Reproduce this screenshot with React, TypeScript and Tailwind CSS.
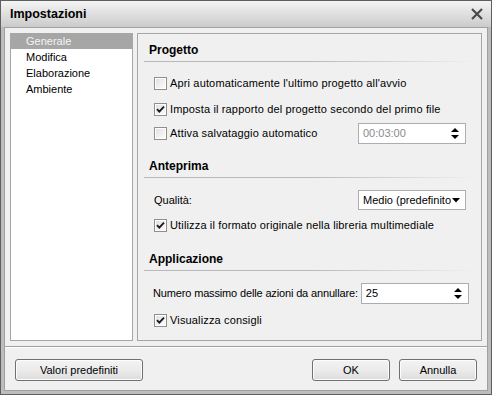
import React from 'react';

const font = { fontFamily: '"Liberation Sans", Arial, sans-serif' };

function CheckBox({ checked }: { checked?: boolean }) {
  return (
    <div className="w-[13px] h-[13px] shrink-0 border border-[#8e8f8f] bg-white p-[1px]">
      <div className="w-full h-full bg-linear-to-br from-[#e2e2e2] to-[#fbfbfb] flex items-center justify-center">
        {checked && (
          <svg width="9" height="9" viewBox="0 0 9 9">
            <path d="M1 4.2 L3.3 6.6 L8 1.6" fill="none" stroke="#1b1b1b" strokeWidth="1.9" />
          </svg>
        )}
      </div>
    </div>
  );
}

function Option({ checked, label }: { checked?: boolean; label: string }) {
  return (
    <div className="flex items-center gap-[3px]">
      <CheckBox checked={checked} />
      <span className="leading-[13px] whitespace-nowrap tracking-[0.15px]">{label}</span>
    </div>
  );
}

function Header({ title, first }: { title: string; first?: boolean }) {
  return (
    <div className={first ? 'mt-[9px]' : ''}>
      <div className="pl-[11px] h-[14px] leading-[14px] font-bold text-[12px]">{title}</div>
      <div className="mt-[4px] ml-[6px] mr-[6px] h-[1px] bg-linear-to-r from-[#b9b9b9] via-[#b9b9b9] to-[#f0f0f0]" />
    </div>
  );
}

function Spin({ value, disabled }: { value: string; disabled?: boolean }) {
  return (
    <div className="w-[108px] shrink-0 ml-auto h-[21px] border border-[#abadb3] bg-white flex items-center justify-between pl-[4px] pr-[6px]">
      <span className={disabled ? 'text-[#8a8a8a]' : 'text-black'}>{value}</span>
      <svg width="8" height="13" viewBox="0 0 8 13">
        <path d="M0 5 L4 1 L8 5 Z" fill="#000" />
        <path d="M0 8 L4 12 L8 8 Z" fill="#000" />
      </svg>
    </div>
  );
}

function Button({ label, w }: { label: string; w: string }) {
  return (
    <div className={`${w} h-[22px] rounded-[3px] border border-[#707070] bg-linear-to-b from-[#f3f3f3] via-[#ebebeb] to-[#dcdcdc] flex items-center justify-center shadow-[inset_0_0_0_1px_#fcfcfc]`}>
      {label}
    </div>
  );
}

export default function App() {
  return (
    <div className="w-[492px] h-[395px] bg-[#bdbdbd] border border-[#5f5f5f] flex flex-col text-[11px] text-black" style={font}>
      <div className="h-[26px] shrink-0 bg-linear-to-b from-[#f4f4f4] to-[#cbcbcb] flex items-center justify-between pl-[9px] pr-[7px]">
        <span className="font-bold text-[12.5px]">Impostazioni</span>
        <svg width="14" height="14" viewBox="0 0 14 14">
          <path d="M2 2 L12 12 M12 2 L2 12" stroke="#4b4b4b" strokeWidth="2.2" />
        </svg>
      </div>
      <div className="flex-1 mx-[3px] mb-[3px] border border-[#a0a0a0] bg-[#f0f0f0] flex flex-col">
        <div className="flex gap-[4px] pt-[5px] px-[5px] h-[313px]">
          <div className="w-[123px] shrink-0 h-full border border-[#a6a6a6] bg-white flex flex-col">
            <div className="h-[15px] leading-[15px] bg-[#a6a6a6] text-[#f4f4f4] pl-[15px]">Generale</div>
            <div className="h-[16px] leading-[17px] pl-[15px]">Modifica</div>
            <div className="h-[16px] leading-[16px] pl-[15px]">Elaborazione</div>
            <div className="h-[16px] leading-[16px] pl-[15px]">Ambiente</div>
          </div>
          <div className="flex-1 min-w-0 h-full border border-[#a6a6a6] flex flex-col">
            <Header title="Progetto" first />
            <div className="pl-[16px] mt-[15px]">
              <Option label="Apri automaticamente l'ultimo progetto all'avvio" />
            </div>
            <div className="pl-[16px] mt-[13px]">
              <Option checked label="Imposta il rapporto del progetto secondo del primo file" />
            </div>
            <div className="pl-[16px] pr-[15px] mt-[7px] flex items-center">
              <Option label="Attiva salvataggio automatico" />
              <Spin value="00:03:00" disabled />
            </div>
            <div className="mt-[15px]">
              <Header title="Anteprima" />
            </div>
            <div className="pl-[16px] pr-[15px] mt-[12px] flex items-center justify-between">
              <span>Qualità:</span>
              <div className="w-[108px] shrink-0 h-[20px] border border-[#abadb3] bg-white flex items-center justify-between pl-[4px] pr-[5px]">
                <span className="overflow-hidden whitespace-nowrap w-[88px]">Medio (predefinito)</span>
                <svg width="8" height="5" viewBox="0 0 8 5">
                  <path d="M0 0 L8 0 L4 4.5 Z" fill="#000" />
                </svg>
              </div>
            </div>
            <div className="pl-[16px] mt-[9px]">
              <Option checked label="Utilizza il formato originale nella libreria multimediale" />
            </div>
            <div className="mt-[20px]">
              <Header title="Applicazione" />
            </div>
            <div className="pl-[15px] pr-[15px] mt-[12px] flex items-center gap-[3px]">
              <span className="whitespace-nowrap tracking-[-0.15px]">Numero massimo delle azioni da annullare:</span>
              <Spin value="25" />
            </div>
            <div className="pl-[16px] mt-[10px]">
              <Option checked label="Visualizza consigli" />
            </div>
          </div>
        </div>
        <div className="mt-[5px] h-[1px] bg-[#a0a0a0]" />
        <div className="h-[1px] bg-white" />
        <div className="flex items-center justify-between pl-[10px] pr-[10px] mt-[11px]">
          <Button label="Valori predefiniti" w="w-[128px]" />
          <div className="flex gap-[9px]">
            <Button label="OK" w="w-[78px]" />
            <Button label="Annulla" w="w-[78px]" />
          </div>
        </div>
      </div>
    </div>
  );
}
